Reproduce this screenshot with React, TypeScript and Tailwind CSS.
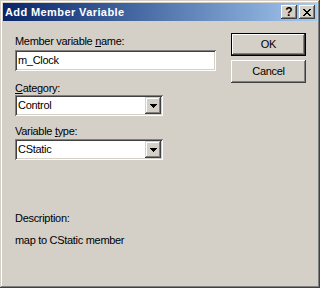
const raised =
	"shadow-[inset_-1px_-1px_#404040,inset_1px_1px_#ffffff,inset_-2px_-2px_#808080,inset_2px_2px_#d4d0c8]";
const sunken =
	"shadow-[inset_1px_1px_#808080,inset_-1px_-1px_#ffffff,inset_2px_2px_#404040,inset_-2px_-2px_#d4d0c8]";

function CloseGlyph() {
	return (
		<svg width="8" height="7" viewBox="0 0 8 7" shapeRendering="crispEdges">
			<path
				d="M0 0h2v1H0zM6 0h2v1H6zM1 1h2v1H1zM5 1h2v1H5zM2 2h4v1H2zM3 3h2v1H3zM2 4h4v1H2zM1 5h2v1H1zM5 5h2v1H5zM0 6h2v1H0zM6 6h2v1H6z"
				fill="#000"
			/>
		</svg>
	);
}

function CaptionButton({ children }: { children: React.ReactNode }) {
	return (
		<div
			className={`flex h-[14px] w-[16px] items-center justify-center bg-[#d4d0c8] ${raised}`}
		>
			{children}
		</div>
	);
}

function Combo({ value }: { value: string }) {
	return (
		<div className={`flex h-[21px] w-[148px] bg-white p-[2px] ${sunken}`}>
			<div className="flex flex-1 items-center pl-[1px]">{value}</div>
			<div className="flex h-[17px] w-[16px] items-center justify-center bg-[#d4d0c8] shadow-[inset_-1px_-1px_#404040,inset_1px_1px_#d4d0c8,inset_-2px_-2px_#808080,inset_2px_2px_#ffffff]">
				<svg width="7" height="4" viewBox="0 0 7 4" shapeRendering="crispEdges">
					<path d="M0 0h7v1H0zM1 1h5v1H1zM2 2h3v1H2zM3 3h1v1H3z" fill="#000" />
				</svg>
			</div>
		</div>
	);
}

export default function App() {
	return (
		<div className="flex h-[288px] w-[320px] flex-col bg-[#d4d0c8] p-[3px] font-['Liberation_Sans',Arial,sans-serif] text-[11px] leading-[13px] tracking-[-0.3px] text-black shadow-[inset_-1px_-1px_#404040,inset_1px_1px_#d4d0c8,inset_-2px_-2px_#808080,inset_2px_2px_#ffffff]">
			<div className="flex h-[18px] items-center bg-gradient-to-r from-[#0a246a] to-[#a6caf0] pl-[2px] pr-[2px]">
				<span className="font-bold tracking-[0.4px] text-white">
					Add Member Variable
				</span>
				<div className="ml-auto flex gap-[2px]">
					<CaptionButton>
						<span className="text-[12px] font-bold leading-none tracking-normal">
							?
						</span>
					</CaptionButton>
					<CaptionButton>
						<CloseGlyph />
					</CaptionButton>
				</div>
			</div>

			<div className="flex flex-1 pl-[12px] pr-[11px]">
				<div className="flex w-[201px] flex-col pt-[14px]">
					<div>
						Member variable <u>n</u>ame:
					</div>
					<div
						className={`mt-[2px] flex h-[21px] items-center bg-white pl-[3px] ${sunken}`}
					>
						m_Clock
					</div>

					<div className="mt-[11px]">
						<u>C</u>ategory:
					</div>
					<Combo value="Control" />

					<div className="mt-[9px]">
						Variable <u>t</u>ype:
					</div>
					<div className="mt-[1px]">
						<Combo value="CStatic" />
					</div>

					<div className="mt-[52px]">Description:</div>
					<div className="mt-[9px]">map to CStatic member</div>
				</div>

				<div className="ml-auto flex w-[75px] flex-col gap-[4px] pt-[12px]">
					<div className="h-[23px] border border-black bg-[#d4d0c8]">
						<div className="flex h-full items-center justify-center shadow-[inset_-1px_-1px_#404040,inset_1px_1px_#ffffff,inset_-2px_-2px_#808080]">
							OK
						</div>
					</div>
					<div
						className={`flex h-[23px] items-center justify-center bg-[#d4d0c8] ${raised}`}
					>
						Cancel
					</div>
				</div>
			</div>
		</div>
	);
}
